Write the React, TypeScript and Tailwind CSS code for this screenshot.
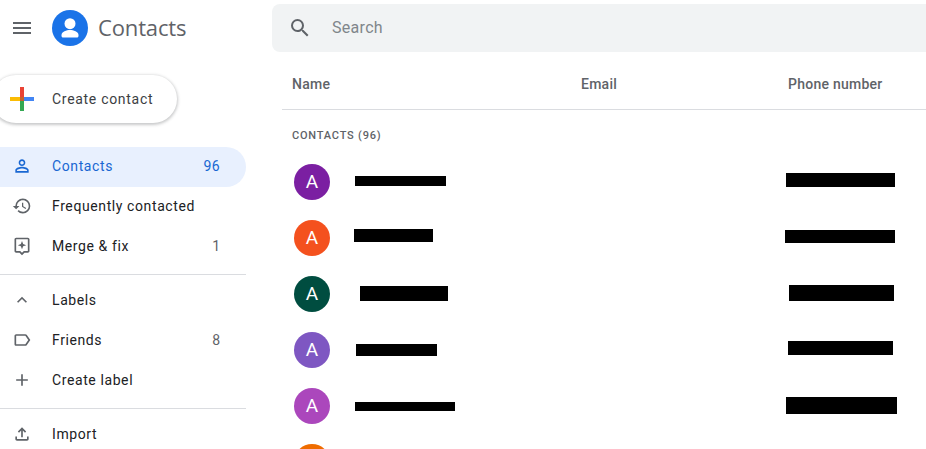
import React from "react";

const Icon = ({ d, className }: { d: string; className?: string }) => (
  <svg viewBox="0 0 24 24" className={className ?? "w-6 h-6 shrink-0 fill-[#5f6368]"}>
    <path d={d} />
  </svg>
);

const icons = {
  menu: "M3 18h18v-2H3v2zm0-5h18v-2H3v2zm0-7v2h18V6H3z",
  search:
    "M15.5 14h-.79l-.28-.27A6.471 6.471 0 0 0 16 9.5 6.5 6.5 0 1 0 9.5 16c1.61 0 3.09-.59 4.23-1.57l.27.28v.79l5 4.99L20.49 19l-4.99-5zm-6 0C7.01 14 5 11.99 5 9.5S7.01 5 9.5 5 14 7.01 14 9.5 11.99 14 9.5 14z",
  person:
    "M12 5.9c1.16 0 2.1.94 2.1 2.1s-.94 2.1-2.1 2.1S9.9 9.16 9.9 8s.94-2.1 2.1-2.1m0 9c2.97 0 6.1 1.46 6.1 2.1v1.1H5.9V17c0-.64 3.13-2.1 6.1-2.1M12 4C9.79 4 8 5.79 8 8s1.79 4 4 4 4-1.79 4-4-1.79-4-4-4zm0 9c-2.67 0-8 1.34-8 4v3h16v-3c0-2.66-5.33-4-8-4z",
  history:
    "M13 3a9 9 0 0 0-9 9H1l3.89 3.89.07.14L9 12H6c0-3.87 3.13-7 7-7s7 3.13 7 7-3.13 7-7 7c-1.93 0-3.68-.79-4.94-2.06l-1.42 1.42A8.954 8.954 0 0 0 13 21a9 9 0 0 0 0-18zm-1 5v5l4.28 2.54.72-1.21-3.5-2.08V8H12z",
  merge:
    "M19 2H5c-1.1 0-2 .9-2 2v14c0 1.1.9 2 2 2h4l3 3 3-3h4c1.1 0 2-.9 2-2V4c0-1.1-.9-2-2-2zm0 16h-4.83L12 20.17 9.83 18H5V4h14v14zM12 6l1.4 3.6L17 11l-3.6 1.4L12 16l-1.4-3.6L7 11l3.6-1.4z",
  chevron: "M12 8l-6 6 1.41 1.41L12 10.83l4.59 4.58L18 14z",
  label:
    "M17.63 5.84C17.27 5.33 16.67 5 16 5L5 5.01C3.9 5.01 3 5.9 3 7v10c0 1.1.9 1.99 2 1.99L16 19c.67 0 1.27-.33 1.63-.84L22 12l-4.37-6.16zM16 17H5V7h11l3.55 5L16 17z",
  plus: "M19 13h-6v6h-2v-6H5v-2h6V5h2v6h6v2z",
  upload:
    "M18 15v3H6v-3H4v3c0 1.1.9 2 2 2h12c1.1 0 2-.9 2-2v-3h-2zM7 9l1.41 1.41L11 7.83V16h2V7.83l2.59 2.58L17 9l-5-5-5 5z",
};

const contacts = [
  { color: "bg-[#7b1fa2]", letter: "A", name: "mt-[22px] ml-[25px] w-[91px] h-[10px]", phone: "mt-[19px] -ml-[2px] w-[109px] h-[14px]" },
  { color: "bg-[#f4511e]", letter: "A", name: "mt-[19px] ml-[24px] w-[79px] h-[13px]", phone: "mt-[20px] -ml-[3px] w-[110px] h-[13px]" },
  { color: "bg-[#004d40]", letter: "A", name: "mt-[20px] ml-[30px] w-[88px] h-[15px]", phone: "mt-[19px] ml-[1px] w-[105px] h-[16px]" },
  { color: "bg-[#7e57c2]", letter: "A", name: "mt-[22px] ml-[26px] w-[81px] h-[12px]", phone: "mt-[19px] ml-0 w-[105px] h-[14px]" },
  { color: "bg-[#ab47bc]", letter: "A", name: "mt-[24px] ml-[25px] w-[100px] h-[9px]", phone: "mt-[19px] -ml-[2px] w-[111px] h-[17px]" },
  { color: "bg-[#ef6c00]", letter: "", name: "", phone: "" },
];

const NavItem = ({
  icon,
  label,
  count,
  active,
}: {
  icon: string;
  label: string;
  count?: string;
  active?: boolean;
}) => (
  <div
    className={`flex items-center h-10 pb-[2px] pl-[12px] pr-[26px] text-[14px] rounded-r-[20px] ${
      active ? "bg-[#e8f0fe] text-[#1967d2]" : "text-[#202124]"
    }`}
  >
    <Icon d={icon} className={`w-5 h-5 shrink-0 -mt-px ${active ? "fill-[#1967d2]" : "fill-[#5f6368]"}`} />
    <span className="ml-[20px] flex-1 tracking-[0.6px]">{label}</span>
    {count && <span className={active ? "tracking-[0.4px]" : "text-[#5f6368]"}>{count}</span>}
  </div>
);

export default function App() {
  return (
    <div className="flex h-[449px] w-[926px] overflow-hidden bg-white font-['Roboto',sans-serif]">
      {/* sidebar */}
      <aside className="w-[246px] shrink-0 mr-[26px]">
        <div className="flex items-center h-12 mt-1 pl-[10px]">
          <Icon d={icons.menu} className="w-6 h-6 shrink-0 fill-[#5f6368]" />
          <div className="ml-[18px] w-9 h-9 rounded-full bg-[#1a73e8]">
            <svg viewBox="0 0 36 36" className="w-9 h-9 fill-white">
              <circle cx="18" cy="13.7" r="5.5" />
              <path d="M9.5 25c0-3.2 5.2-5 8.5-5s8.5 1.8 8.5 5v1c0 .8-.7 1.5-1.5 1.5H11c-.8 0-1.5-.7-1.5-1.5z" />
            </svg>
          </div>
          <span className="ml-[10px] pb-[2px] text-[22px] text-[#5f6368] font-['Open_Sans',sans-serif] tracking-[-0.15px]">Contacts</span>
        </div>

        <div className="flex items-center w-[185px] h-12 -ml-2 mt-[23px] rounded-full bg-white shadow-[0_1px_3px_1px_rgba(60,64,67,0.28)]">
          <svg viewBox="0 0 24 24" className="w-6 h-6 ml-[18px] shrink-0">
            <path fill="#ea4335" d="M10 0h4v12h-4z" />
            <path fill="#4285f4" d="M14 10h10v4H14z" />
            <path fill="#fbbc04" d="M0 10h10v4H0z" />
            <path fill="#34a853" d="M10 14h4v10h-4z" />
            <path fill="#c5622f" d="M10 10h4v4h-4z" />
          </svg>
          <span className="ml-[18px] text-[14px] text-[#3c4043] tracking-[0.7px]">Create contact</span>
        </div>

        <nav className="mt-6">
          <NavItem icon={icons.person} label="Contacts" count="96" active />
          <NavItem icon={icons.history} label="Frequently contacted" />
          <NavItem icon={icons.merge} label="Merge & fix" count="1" />
          <div className="h-px bg-[#dadce0] mt-[7px] mb-[6px]" />
          <NavItem icon={icons.chevron} label="Labels" />
          <NavItem icon={icons.label} label="Friends" count="8" />
          <NavItem icon={icons.plus} label="Create label" />
          <div className="h-px bg-[#dadce0] mt-[7px] mb-[6px]" />
          <NavItem icon={icons.upload} label="Import" />
        </nav>
      </aside>

      {/* main */}
      <main className="flex-1 min-w-0">
        <div className="flex items-center h-12 mt-1 pl-[16px] bg-[#f1f3f4] rounded-l-lg">
          <Icon d={icons.search} className="w-6 h-6 shrink-0 fill-[#5f6368]" />
          <span className="ml-[20px] text-[16px] text-[#80868b] tracking-[0.3px]">Search</span>
        </div>

        <div className="ml-[10px]">
          <div className="grid grid-cols-[289px_207px_1fr] items-center h-[58px] pt-[7px] pl-[10px] border-b border-[#dadce0] text-[14px] font-medium text-[#5f6368] tracking-[0.25px]">
            <span>Name</span>
            <span>Email</span>
            <span>Phone number</span>
          </div>
          <div className="h-[44px] flex items-center pt-[8px] pl-[10px] text-[11px] font-medium text-[#5f6368] tracking-[0.8px]">
            CONTACTS (96)
          </div>
          {contacts.map((c, i) => (
            <div key={i} className="grid grid-cols-[289px_207px_1fr] h-14 pl-[10px]">
              <div className="flex items-start">
                <div className={`ml-[2px] mt-[10px] w-9 h-9 shrink-0 rounded-full ${c.color} flex items-center justify-center text-white text-[19px]`}>
                  {c.letter}
                </div>
                {c.name && <div className={`bg-black ${c.name}`} />}
              </div>
              <div />
              {c.phone && <div className={`bg-black ${c.phone}`} />}
            </div>
          ))}
        </div>
      </main>
    </div>
  );
}
